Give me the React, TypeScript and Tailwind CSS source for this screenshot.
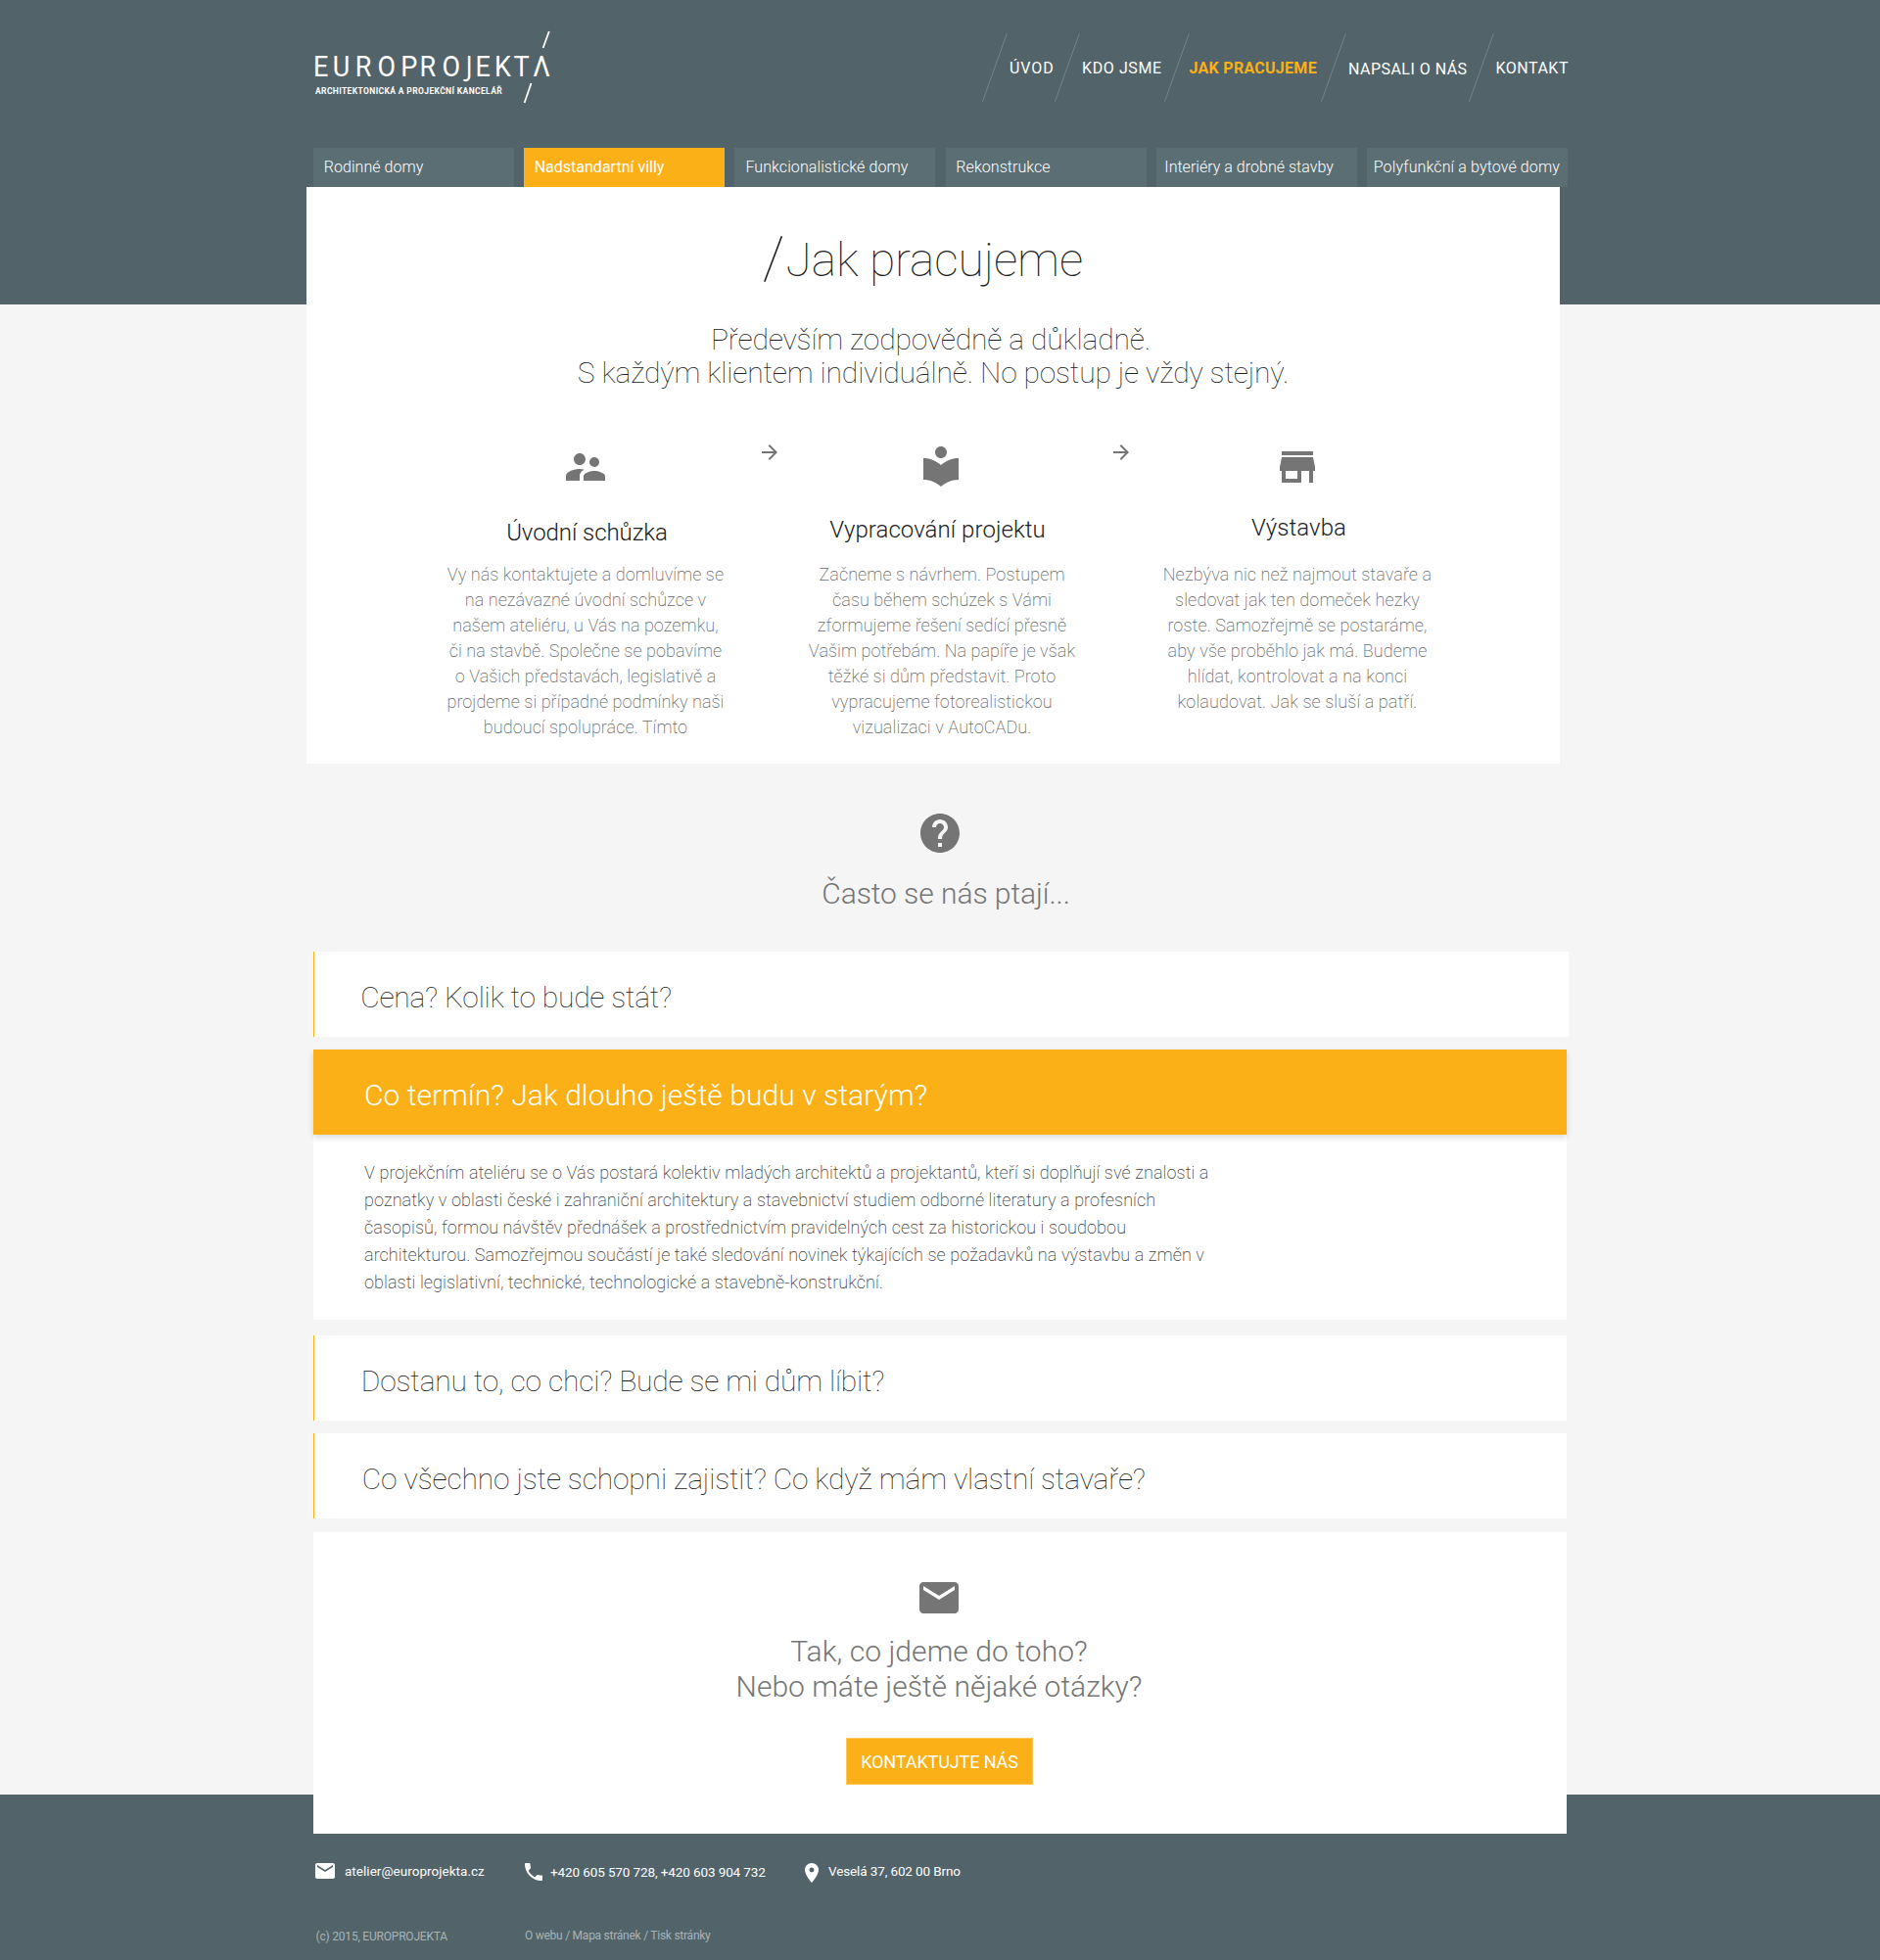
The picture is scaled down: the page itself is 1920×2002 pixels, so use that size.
import type { ReactNode } from 'react';
import {
  MdArrowForward,
  MdEmail,
  MdHelp,
  MdLocalLibrary,
  MdPhone,
  MdPlace,
  MdStore,
  MdSupervisorAccount,
} from 'react-icons/md';

function Logo() {
  return (
    <svg className="mt-[30px] h-[78px] w-[246px] shrink-0" viewBox="320 30 246 78" role="img" aria-label="Europrojekta">
      <text
        transform="scale(.9 1)"
        x="355.7 377.6 403.1 428.4 454.6 476.1 501.8 528.3 539.4 561.2 582.9 604.6"
        y="78.4"
        className="fill-white font-['Roboto',sans-serif] text-[30px]"
      >
        EUROPRO<tspan className="font-['Open_Sans',sans-serif]">J</tspan>EKTΛ
      </text>
      <text
        x="322"
        y="96"
        textLength="190.7"
        className="fill-white font-['Roboto',sans-serif] text-[8.5px] font-bold"
      >
        ARCHITEKTONICKÁ A PROJEKČNÍ KANCELÁŘ
      </text>
      <path d="M560.8 32 554.6 49M542.5 85 535.6 105" stroke="#fff" strokeWidth="1.8" fill="none" />
    </svg>
  );
}

const nav = [
  { label: 'ÚVOD', box: 'w-[74px]', text: 'ml-[2.5px] mt-6 tracking-[0.9px]' },
  { label: 'KDO JSME', box: 'w-[112px]', text: 'ml-[2.5px] mt-6 tracking-[0.6px]' },
  { label: 'JAK PRACUJEME', box: 'w-[160px]', text: 'mt-6 font-bold tracking-[0.28px] text-[#fcb017]' },
  { label: 'NAPSALI O NÁS', box: 'w-[151px]', text: 'ml-[2.5px] mt-[25px] tracking-[0.47px]' },
  { label: 'KONTAKT', box: 'w-[103px]', text: 'ml-0.5 mt-6 tracking-[0.5px]' },
];

const tabs = [
  { label: 'Rodinné domy', cls: 'pl-[10.8px] font-light tracking-[0.05px] bg-[#5b6e74]' },
  { label: 'Nadstandartní villy', cls: 'pl-[10.5px] font-[450] bg-[#fcb017]' },
  { label: 'Funkcionalistické domy', cls: 'pl-[11px] font-light tracking-[0.09px] bg-[#5b6e74]' },
  { label: 'Rekonstrukce', cls: 'pl-[10.8px] font-light tracking-[0.05px] bg-[#5b6e74]' },
  { label: 'Interiéry a drobné stavby', cls: 'pl-[8.6px] font-light tracking-[0.02px] bg-[#5b6e74]' },
  { label: 'Polyfunkční a bytové domy', cls: 'pl-[6.8px] font-light tracking-[0.12px] bg-[#5b6e74]' },
];

function Step({
  icon,
  title,
  titleClass,
  lines,
  linesClass,
  className,
}: {
  icon: ReactNode;
  title: string;
  titleClass: string;
  lines: string[];
  linesClass: string;
  className: string;
}) {
  return (
    <section className={`flex w-[300px] flex-col items-center ${className}`}>
      {icon}
      <h3 className={`text-2xl/8 font-light text-[#212121] ${titleClass}`}>{title}</h3>
      <p className={`text-center text-lg/[26px] font-extralight whitespace-nowrap text-[#6b6b6b] ${linesClass}`}>
        {lines.map((l) => (
          <span key={l} className="block">
            {l}
          </span>
        ))}
      </p>
    </section>
  );
}

function Question({ children, className }: { children: ReactNode; className: string }) {
  return (
    <div className={`h-[87px] border-l border-[#fcb017] bg-white pt-[29px] ${className}`}>
      <h3 className="text-3xl/9 font-thin whitespace-nowrap text-[#212121]">{children}</h3>
    </div>
  );
}

const answer = [
  'V projekčním ateliéru se o Vás postará kolektiv mladých architektů a projektantů, kteří si doplňují své znalosti a',
  'poznatky v oblasti české i zahraniční architektury a stavebnictví studiem odborné literatury a profesních',
  'časopisů, formou návštěv přednášek a prostřednictvím pravidelných cest za historickou i soudobou',
  'architekturou. Samozřejmou součástí je také sledování novinek týkajících se požadavků na výstavbu a změn v',
  'oblasti legislativní, technické, technologické a stavebně-konstrukční.',
];

export default function App() {
  return (
    <div className="h-[2002px] w-[1920px] overflow-hidden bg-[linear-gradient(to_bottom,#526369_311px,#f5f5f5_311px,#f5f5f5_1833px,#526369_1833px)] pl-[320px] font-['Roboto',sans-serif]">
      <header className="w-[1282px] text-white">
        <div className="flex h-[151px] justify-between">
          <Logo />
          <nav className="-mr-[0.5px] flex pt-[34px]">
            {nav.map((n) => (
              <a key={n.label} className={`flex items-start ${n.box}`}>
                <svg className="h-[70px] w-[26px] shrink-0" viewBox="0 0 26 70">
                  <path d="M25.3 0.3 0.5 69.7" stroke="#72848a" strokeWidth="1" />
                </svg>
                <span className={`text-base/6 whitespace-nowrap ${n.text}`}>{n.label}</span>
              </a>
            ))}
          </nav>
        </div>
        <div className="flex gap-[10.2px]">
          {tabs.map((t) => (
            <a key={t.label} className={`h-10 w-[205px] shrink-0 text-base/10 whitespace-nowrap ${t.cls}`}>
              {t.label}
            </a>
          ))}
        </div>
      </header>

      <main>
        <section className="-ml-[7px] h-[589px] w-[1280px] bg-white pt-[50px]">
          <div className="flex pl-[466.5px]">
            <svg className="h-12 w-5 shrink-0" viewBox="0 0 20 48">
              <path d="M18.4 0.3 0.8 46.8" stroke="#212121" strokeWidth="1.6" />
            </svg>
            <h1 className="mt-px ml-[3px] text-5xl/12 font-thin tracking-[-0.12px] text-[#212121]">Jak pracujeme</h1>
          </div>
          <p className="mt-10 text-center text-3xl/[34px] font-thin tracking-[-0.16px] text-[#212121]">
            <span className="block pr-[5px]">Především zodpovědně a důkladně.</span>
            <span className="block">S každým klientem individuálně. No postup je vždy stejný.</span>
          </p>
          <div className="mt-[52px] flex pl-[135px] text-[#757575]">
            <Step
              className="pt-[3px]"
              icon={<MdSupervisorAccount size={48} />}
              title="Úvodní schůzka"
              titleClass="mt-[27px] pl-[3px] tracking-[-0.06px]"
              linesClass="mt-3.5 tracking-[0.05px]"
              lines={[
                'Vy nás kontaktujete a domluvíme se',
                'na nezávazné úvodní schůzce v',
                'našem ateliéru, u Vás na pozemku,',
                'či na stavbě. Společne se pobavíme',
                'o Vašich představách, legislativě a',
                'projdeme si případné podmínky naši',
                'budoucí spolupráce. Tímto',
              ]}
            />
            <MdArrowForward size={24} className="ml-[26px] shrink-0" />
            <Step
              className="ml-[13px] pt-0.5"
              icon={<MdLocalLibrary size={48} />}
              title="Vypracování projektu"
              titleClass="mt-[25px] pr-[7px] tracking-[0.06px]"
              linesClass="mt-[17px] pl-0.5 tracking-[0.06px]"
              lines={[
                'Začneme s návrhem. Postupem',
                'času během schúzek s Vámi',
                'zformujeme řešení sedící přesně',
                'Vašim potřebám. Na papíře je však',
                'těžké si dům představit. Proto',
                'vypracujeme fotorealistickou',
                'vizualizaci v AutoCADu.',
              ]}
            />
            <MdArrowForward size={24} className="ml-[22px] shrink-0" />
            <Step
              className="ml-[18px] pt-[3px]"
              icon={<MdStore size={48} />}
              title="Výstavba"
              titleClass="mt-[22px] pl-[3px] tracking-[0.08px]"
              linesClass="mt-[19px] tracking-[0.1px]"
              lines={[
                'Nezbýva nic než najmout stavaře a',
                'sledovat jak ten domeček hezky',
                'roste. Samozřejmě se postaráme,',
                'aby vše proběhlo jak má. Budeme',
                'hlídat, kontrolovat a na konci',
                'kolaudovat. Jak se sluší a patří.',
              ]}
            />
          </div>
        </section>

        <section className="w-[1280px]">
          <div className="flex flex-col items-center pt-[47px] text-[#757575]">
            <MdHelp size={48} />
            <h2 className="mt-5 pl-3 text-3xl/9 font-light tracking-[-0.06px]">Často se nás ptají...</h2>
          </div>
          <Question className="mt-[41px] w-[1282px] pl-[47.2px] tracking-[-0.22px]">Cena? Kolik to bude stát?</Question>
          <div className="mt-[13px] bg-white">
            <h3 className="relative h-[87px] bg-[#fcb017] pt-[29px] pl-[52px] text-3xl/9 font-light tracking-[0.06px] text-white shadow-[0_3px_6px_rgba(0,0,0,0.15)]">
              Co termín? Jak dlouho ještě budu v starým?
            </h3>
            <p className="h-[189px] pt-[25px] pl-[52px] text-lg/7 font-extralight tracking-[0.085px] whitespace-nowrap text-[#424242]">
              {answer.map((l) => (
                <span key={l} className="block">
                  {l}
                </span>
              ))}
            </p>
          </div>
          <Question className="mt-4 pl-[47.8px] tracking-[-0.18px]">Dostanu to, co chci? Bude se mi dům líbit?</Question>
          <Question className="mt-[13px] pl-[48.8px] tracking-[-0.15px]">
            Co všechno jste schopni zajistit? Co když mám vlastní stavaře?
          </Question>
        </section>

        <section className="mt-3.5 flex h-[308px] w-[1280px] flex-col items-center bg-white pt-[43px] pr-0.5 text-[#757575]">
          <MdEmail size={48} />
          <h2 className="mt-[13px] text-center text-3xl/9 font-light">
            <span className="block tracking-[0.07px]">Tak, co jdeme do toho?</span>
            <span className="block">Nebo máte ještě nějaké otázky?</span>
          </h2>
          <button className="mt-[34px] ml-px h-12 w-[191px] border border-[#fdc75a] bg-[#fcb017] pt-px text-lg/[46px] tracking-[-0.11px] text-white">
            KONTAKTUJTE NÁS
          </button>
        </section>
      </main>

      <footer className="pt-[26px] text-white">
        <div className="flex h-[26px] items-start text-[13.5px]/6">
          <a className="flex w-[213px] gap-2">
            <MdEmail size={24} />
            <span className="tracking-[0.03px]">atelier@europrojekta.cz</span>
          </a>
          <span className="flex w-[284px] gap-[5px] tracking-[-0.11px]">
            <MdPhone size={24} className="mt-px" />
            <span className="mt-[0.5px]">+420 605 570 728, +420 603 904 732</span>
          </span>
          <span className="flex gap-[5px] tracking-[-0.12px]">
            <MdPlace size={24} className="mt-0.5" />
            <span>Veselá 37, 602 00 Brno</span>
          </span>
        </div>
        <div className="mt-11 flex items-start text-xs/4 text-[#a9b3b6]">
          <span className="mt-px w-[216px] pl-[2.5px] tracking-[-0.2px]">(c) 2015, EUROPROJEKTA</span>
          <span className="tracking-[-0.25px]">O webu / Mapa stránek / Tisk stránky</span>
        </div>
      </footer>
    </div>
  );
}
